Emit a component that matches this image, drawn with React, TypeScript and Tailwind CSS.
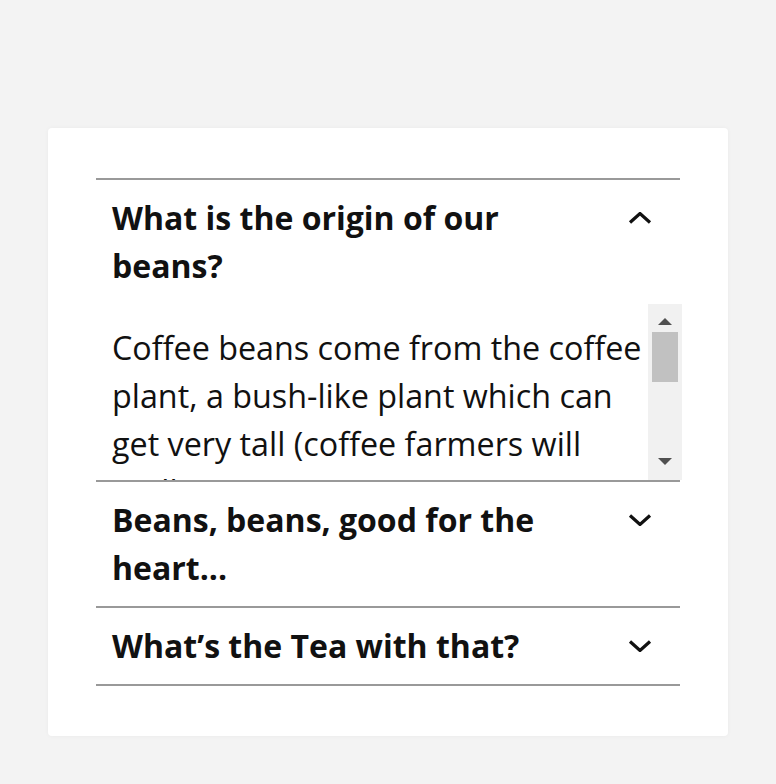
import { useState } from "react";

type Item = {
  id: string;
  title: string;
  body: string;
};

const ITEMS: Item[] = [
  {
    id: "origin",
    title: "What is the origin of our beans?",
    body: "Coffee beans come from the coffee plant, a bush-like plant which can get very tall (coffee farmers will really use some care on more cover crops as they keep them at a height that is easy to harvest). The plants produce cherries, and inside each cherry sit two beans.",
  },
  {
    id: "heart",
    title: "Beans, beans, good for the heart...",
    body: "Coffee in moderation has been linked to a lower risk of heart disease.",
  },
  {
    id: "tea",
    title: "What\u2019s the Tea with that?",
    body: "We also carry a small selection of loose leaf teas.",
  },
];

function Chevron({ open }: { open: boolean }) {
  return (
    <svg width="24" height="12" viewBox="0 0 24 12" fill="none" aria-hidden>
      <polyline
        points={open ? "2,10.5 12,1.5 22,10.5" : "2,1.5 12,10.5 22,1.5"}
        stroke="#111"
        strokeWidth="3.2"
        strokeLinejoin="miter"
      />
    </svg>
  );
}

function FakeScrollbar() {
  return (
    <div className="-mr-[2px] flex w-[34px] shrink-0 flex-col items-center bg-[#f1f1f1]">
      <svg className="mt-[14px]" width="14" height="7" viewBox="0 0 14 7">
        <polygon points="7,0 14,7 0,7" fill="#505050" />
      </svg>
      <div className="mt-[7px] h-[50px] w-[26px] bg-[#c1c1c1]" />
      <div className="flex-1" />
      <svg className="mb-[15px]" width="14" height="7" viewBox="0 0 14 7">
        <polygon points="0,0 14,0 7,7" fill="#505050" />
      </svg>
    </div>
  );
}

export default function App() {
  const [openId, setOpenId] = useState<string | null>("origin");

  return (
    <div
      className="min-h-screen bg-[#f3f3f3] px-12 pt-[128px] pb-12 text-[#111]"
      style={{ fontFamily: '"Open Sans", "Noto Sans", sans-serif' }}
    >
      <div className="rounded-[4px] bg-white px-12 py-[50px] shadow-[0_0_4px_rgba(0,0,0,0.04)]">
        <div className="border-t-2 border-[#999]">
          {ITEMS.map((item) => {
            const open = openId === item.id;
            return (
              <div key={item.id} className="border-b-2 border-[#999]">
                <button
                  type="button"
                  onClick={() => setOpenId(open ? null : item.id)}
                  className="flex w-full items-start gap-10 py-[14px] pr-[28px] pl-4 text-left"
                >
                  <span className="flex-1 text-[32px] leading-[48px] font-bold">
                    {item.title}
                  </span>
                  <span className="flex h-[48px] w-[24px] shrink-0 items-center">
                    <Chevron open={open} />
                  </span>
                </button>
                {open ? (
                  <div className="flex h-[176px]">
                    <div className="min-w-0 flex-1 overflow-hidden pt-[19px] pl-4 pr-1">
                      <p className="text-[32.3px] leading-[48px]">{item.body}</p>
                    </div>
                    <FakeScrollbar />
                  </div>
                ) : null}
              </div>
            );
          })}
        </div>
      </div>
    </div>
  );
}
